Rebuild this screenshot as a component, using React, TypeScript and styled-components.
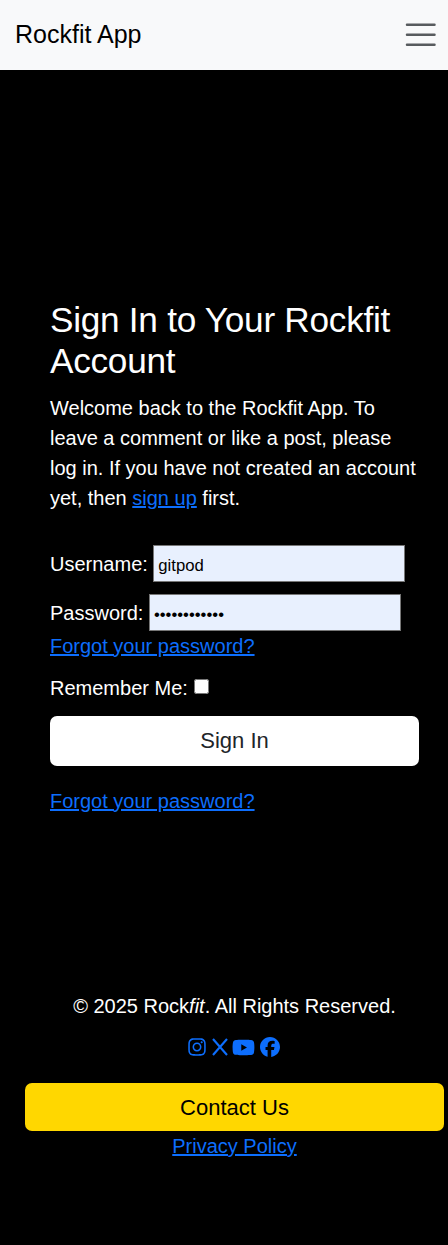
import React from "react";
import styled, { createGlobalStyle } from "styled-components";
import { FaFacebook, FaInstagram, FaYoutube } from "react-icons/fa6";

const GlobalStyle = createGlobalStyle`
  *, *::before, *::after { box-sizing: border-box; }
  body {
    margin: 0;
    background: #000;
    color: #fff;
    font-family: "Liberation Sans", Arial, sans-serif;
    font-size: 20px;
    line-height: 30px;
  }
`;

const Page = styled.div`
  min-height: 1245px;
  display: flex;
  flex-direction: column;
`;

const Navbar = styled.nav`
  height: 70px;
  padding: 0 9px 0 15px;
  display: flex;
  align-items: center;
  justify-content: space-between;
  background: #f8f9fa;
`;

const Brand = styled.a`
  padding-bottom: 2px;
  color: #000;
  font-size: 25px;
  line-height: 38px;
  text-decoration: none;
`;

const Toggler = styled.button`
  display: flex;
  padding: 0;
  border: 0;
  background: none;
`;

const Main = styled.main`
  padding: 229px 29px 0 50px;
`;

const Title = styled.h1`
  margin: 0 0 12px;
  font-size: 35.2px;
  font-weight: 400;
  line-height: 41px;
  letter-spacing: -0.27px;
`;

const Intro = styled.p`
  margin: 0 -10px 32px 0;
`;

const Link = styled.a`
  color: #0d6efd;
  text-decoration: underline;
`;

const Field = styled.div<{ $margin: string }>`
  display: flex;
  align-items: center;
  gap: 5.5px;
  margin: ${(p) => p.$margin};
  white-space: nowrap;
`;

const TextInput = styled.input`
  width: 252px;
  height: 37px;
  padding: 5px 4px 1px;
  border: 1px solid #767676;
  border-radius: 0;
  background: #e8f0fe;
  color: #000;
  font: 16.7px "Liberation Sans", Arial, sans-serif;
`;

const CheckInput = styled.input`
  width: 15px;
  height: 15px;
  margin: 0 0 3px 0.5px;
`;

const Button = styled.button<{ $tone: "light" | "gold" }>`
  display: block;
  width: 100%;
  height: ${(p) => (p.$tone === "gold" ? 48 : 50)}px;
  padding: ${(p) => (p.$tone === "gold" ? "1px 0 0" : "0")};
  border: 0;
  border-radius: 7px;
  background: ${(p) => (p.$tone === "gold" ? "#ffd700" : "#fff")};
  color: ${(p) => (p.$tone === "gold" ? "#000" : "#212529")};
  font: 22px "Liberation Sans", Arial, sans-serif;
`;

const Recovery = styled.p`
  margin: 20px 0 0;
`;

const Footer = styled.footer`
  padding: 175px 4px 0 25px;
  text-align: center;
`;

const Copyright = styled.p`
  margin: 0;
`;

const Social = styled.div`
  display: flex;
  justify-content: center;
  align-items: center;
  gap: 4.5px;
  height: 22px;
  margin: 15px 2px 25px 0;
  color: #0d6efd;
`;

const XLogo = () => (
  <svg width="16" height="18" viewBox="0 0 16 18" fill="none" stroke="currentColor">
    <path d="M1 1L15 17M15 1L1 17" strokeWidth="2.1" />
  </svg>
);

export default function App() {
  return (
    <>
      <GlobalStyle />
      <Page>
        <Navbar>
          <Brand>Rockfit App</Brand>
          <Toggler aria-label="Toggle navigation">
            <svg width="37.5" height="37.5" viewBox="0 0 30 30" fill="none">
              <path
                d="M4 7h22M4 15h22M4 23h22"
                stroke="rgba(33,37,41,.75)"
                strokeLinecap="round"
                strokeMiterlimit="10"
                strokeWidth="2"
              />
            </svg>
          </Toggler>
        </Navbar>
        <Main>
          <Title>Sign In to Your Rockfit Account</Title>
          <Intro>
            Welcome back to the Rockfit App. To
            <br />
            leave a comment or like a post, please
            <br />
            log in. If you have not created an account
            <br />
            yet, then <Link>sign up</Link> first.
          </Intro>
          <Field $margin="0 0 12px">
            <label htmlFor="username">Username:</label>
            <TextInput id="username" type="text" defaultValue="gitpod" />
          </Field>
          <Field $margin="0">
            <label htmlFor="password">Password:</label>
            <TextInput id="password" type="password" defaultValue="rockfit-2025" />
          </Field>
          <Link>Forgot your password?</Link>
          <Field $margin="12px 0 13px">
            <label htmlFor="remember">Remember Me:</label>
            <CheckInput id="remember" type="checkbox" />
          </Field>
          <Button $tone="light">Sign In</Button>
          <Recovery>
            <Link>Forgot your password?</Link>
          </Recovery>
        </Main>
        <Footer>
          <Copyright>
            © 2025 Rock<em>fit</em>. All Rights Reserved.
          </Copyright>
          <Social>
            <FaInstagram size={20} />
            <XLogo />
            <FaYoutube size={23} />
            <FaFacebook size={20} />
          </Social>
          <Button $tone="gold">Contact Us</Button>
          <Link>Privacy Policy</Link>
        </Footer>
      </Page>
    </>
  );
}
